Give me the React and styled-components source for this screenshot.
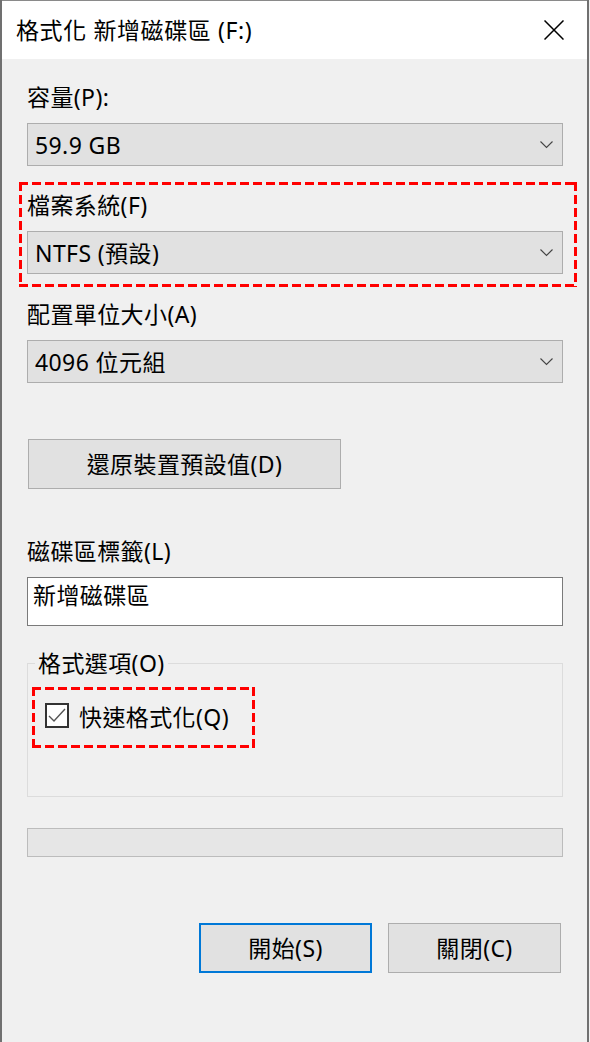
import React from "react";
import styled, { createGlobalStyle, css } from "styled-components";

const GlobalStyle = createGlobalStyle`
  html, body {
    margin: 0;
    padding: 0;
    background: #f0f0f0;
  }
  body {
    font-family: "Noto Sans", "Noto Sans CJK TC", sans-serif;
    color: #000;
    letter-spacing: 0.4px;
  }
`;

// red dashed marker frame, 3px thick, 9px dash / 4px gap
const dashed = css`
  background:
    repeating-linear-gradient(90deg, #ff0000 0 9px, transparent 9px 13px) top left / 100% 3px no-repeat,
    repeating-linear-gradient(90deg, #ff0000 0 9px, transparent 9px 13px) bottom left / 100% 3px no-repeat,
    repeating-linear-gradient(180deg, #ff0000 0 9px, transparent 9px 13px) top left / 3px 100% no-repeat,
    repeating-linear-gradient(180deg, #ff0000 0 9px, transparent 9px 13px) top right / 3px 100% no-repeat;
`;

const Window = styled.div`
  width: 589px;
  min-height: 1042px;
  box-sizing: border-box;
  border-left: 2px solid #707070;
  border-right: 2px solid #707070;
  background: #f0f0f0;
`;

const TitleBar = styled.div`
  height: 59px;
  box-sizing: border-box;
  border-top: 1px solid #8a8a8a;
  background: #fff;
  display: flex;
  align-items: center;
  justify-content: space-between;
  padding: 0 23px 0 14px;
`;

const Title = styled.div`
  font-size: 23px;
  line-height: 30px;
  letter-spacing: 0.6px;
  white-space: nowrap;
`;

const Content = styled.div`
  padding: 23px 0 0 25px;
  width: 536px;
`;

const Label = styled.div`
  font-size: 23px;
  line-height: 30px;
  margin-top: ${(p) => p.$top || 0}px;
  margin-bottom: 11px;
  white-space: nowrap;
`;

const Combo = styled.div`
  height: 43px;
  box-sizing: border-box;
  border: 1px solid #adadad;
  background: #e1e1e1;
  display: flex;
  align-items: center;
  justify-content: space-between;
  padding: 0 9px 0 7px;
  font-size: 23px;
  line-height: 30px;
`;

const Highlight = styled.div`
  ${dashed}
  margin: 16px -14px 0 -8px;
  padding: 8px 14px 13px 8px;
`;

const Button = styled.div`
  width: ${(p) => p.$w || 173}px;
  height: 50px;
  box-sizing: border-box;
  border: ${(p) => (p.$primary ? "2px solid #0078d7" : "1px solid #adadad")};
  background: #e1e1e1;
  display: flex;
  align-items: center;
  justify-content: center;
  font-size: 23px;
  line-height: 30px;
`;

const ResetButton = styled(Button)`
  margin: 56px 0 0 1px;
`;

const TextBox = styled.div`
  height: 49px;
  box-sizing: border-box;
  border: 1px solid #7a7a7a;
  background: #fff;
  padding: 2px 5px;
  font-size: 23px;
  line-height: 30px;
`;

const Group = styled.fieldset`
  margin: 22px 0 0;
  padding: 0 0 48px;
  border: 1px solid #dcdcdc;
  min-width: 0;
`;

const Legend = styled.legend`
  margin-left: 7px;
  padding: 0 3px;
  font-size: 23px;
  line-height: 30px;
`;

const CheckHighlight = styled.div`
  ${dashed}
  display: flex;
  width: fit-content;
  align-items: center;
  gap: 10px;
  margin: 9px 0 0 4px;
  padding: 15px 26px 16px 13px;
`;

const CheckText = styled.span`
  font-size: 23px;
  line-height: 30px;
`;

const Progress = styled.div`
  margin-top: 31px;
  height: 29px;
  box-sizing: border-box;
  border: 1px solid #bcbcbc;
  background: #e6e6e6;
`;

const Footer = styled.div`
  margin-top: 66px;
  display: flex;
  justify-content: flex-end;
  gap: 16px;
  padding-right: 2px;
`;

const Chevron = () => (
  <svg width="13" height="8" viewBox="0 0 13 8">
    <polyline points="0.5,0.5 6.5,6.5 12.5,0.5" fill="none" stroke="#444" strokeWidth="1.1" />
  </svg>
);

const CloseIcon = () => (
  <svg width="20" height="20" viewBox="0 0 20 20">
    <path d="M0.5 0.5 L19.5 19.5 M19.5 0.5 L0.5 19.5" stroke="#000" strokeWidth="1.5" />
  </svg>
);

const CheckBox = () => (
  <svg width="24" height="25" viewBox="0 0 24 25" style={{ marginTop: -3 }}>
    <rect x="1" y="1" width="22" height="23" fill="#fff" stroke="#333" strokeWidth="2" />
    <polyline points="4,13 9,18 20,6" fill="none" stroke="#555" strokeWidth="1.4" />
  </svg>
);

export default function App() {
  return (
    <>
      <GlobalStyle />
      <Window>
        <TitleBar>
          <Title>格式化 新增磁碟區 (F:)</Title>
          <CloseIcon />
        </TitleBar>
        <Content>
          <Label>容量(P):</Label>
          <Combo>
            <span>59.9 GB</span>
            <Chevron />
          </Combo>

          <Highlight>
            <Label>檔案系統(F)</Label>
            <Combo>
              <span>NTFS (預設)</span>
              <Chevron />
            </Combo>
          </Highlight>

          <Label $top={12}>配置單位大小(A)</Label>
          <Combo>
            <span>4096 位元組</span>
            <Chevron />
          </Combo>

          <ResetButton $w={313}>還原裝置預設值(D)</ResetButton>

          <Label $top={47}>磁碟區標籤(L)</Label>
          <TextBox>新增磁碟區</TextBox>

          <Group>
            <Legend>格式選項(O)</Legend>
            <CheckHighlight>
              <CheckBox />
              <CheckText>快速格式化(Q)</CheckText>
            </CheckHighlight>
          </Group>

          <Progress />

          <Footer>
            <Button $primary>開始(S)</Button>
            <Button>關閉(C)</Button>
          </Footer>
        </Content>
      </Window>
    </>
  );
}
